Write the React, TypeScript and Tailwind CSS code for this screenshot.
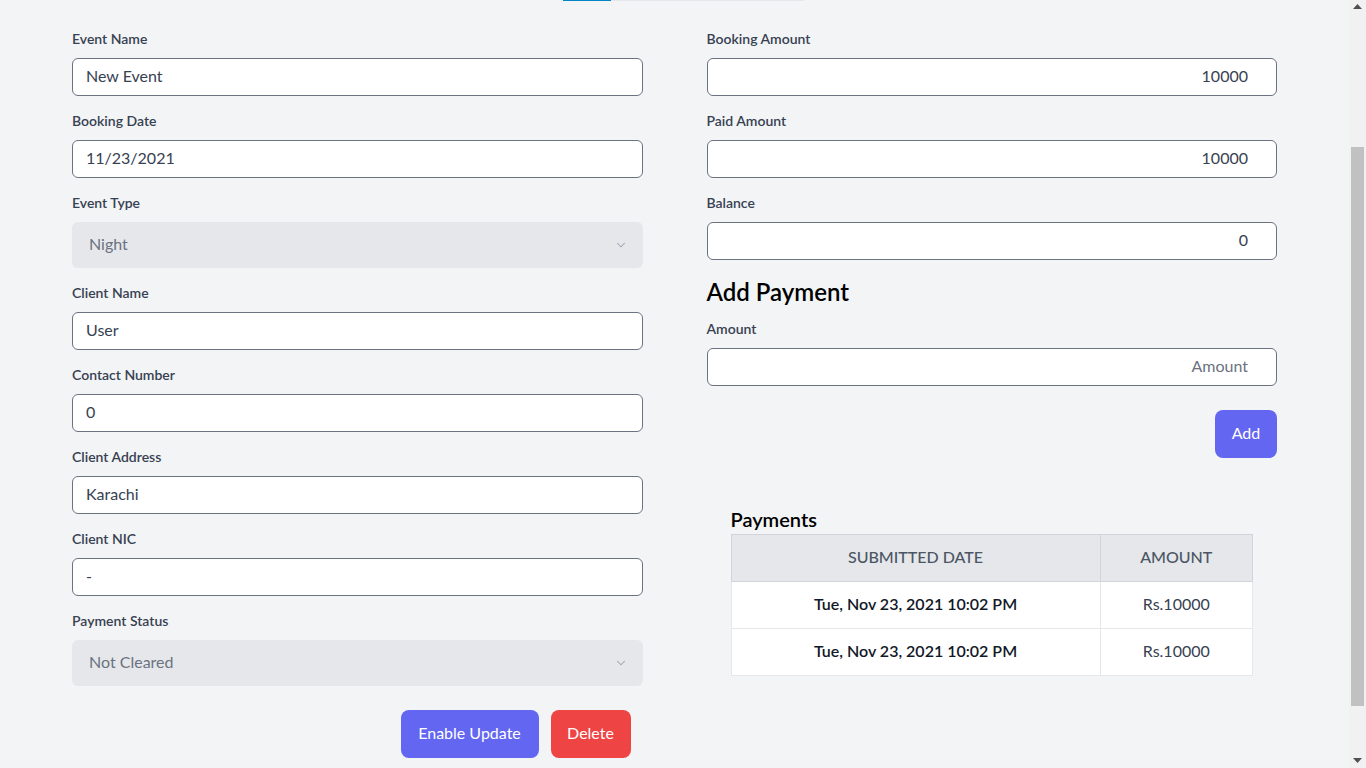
import { ChevronDown } from "lucide-react";

const leftFields = [
  { label: "Event Name", value: "New Event" },
  { label: "Booking Date", value: "11/23/2021" },
  { label: "Event Type", value: "Night", select: true },
  { label: "Client Name", value: "User" },
  { label: "Contact Number", value: "0" },
  { label: "Client Address", value: "Karachi" },
  { label: "Client NIC", value: "-" },
  { label: "Payment Status", value: "Not Cleared", select: true },
];

const amountFields = [
  { label: "Booking Amount", value: "10000" },
  { label: "Paid Amount", value: "10000" },
  { label: "Balance", value: "0" },
];

const payments = [
  { date: "Tue, Nov 23, 2021 10:02 PM", amount: "Rs.10000" },
  { date: "Tue, Nov 23, 2021 10:02 PM", amount: "Rs.10000" },
];

const Label = ({ children }: { children: string }) => (
  <label className="block h-5 mb-[9px] text-sm leading-5 font-semibold text-[#374151]">{children}</label>
);

const Field = ({ label, value, select, right }: { label: string; value: string; select?: boolean; right?: boolean }) => (
  <div>
    <Label>{label}</Label>
    {select ? (
      // disabled select look
      <div className="flex items-center justify-between h-[46px] rounded-md bg-[#e5e7eb] pl-[17px] pr-[15px] pb-[3px] text-base text-[#6b7280]">
        <span>{value}</span>
        <ChevronDown size={14} strokeWidth={1.75} className="mt-[3px] text-[#9ca3af]" />
      </div>
    ) : (
      <input
        readOnly
        defaultValue={value}
        className={`block w-full h-[38px] rounded-md border border-[#6b7280] bg-white pb-[3px] text-base text-[#374151] outline-none ${right ? "text-right pr-7 pl-3" : "px-[13px]"}`}
      />
    )}
  </div>
);

export default function App() {
  return (
    <div className="flex h-[768px] overflow-hidden bg-[#f3f4f6] font-['Lato','Noto_Sans',sans-serif]">
      <div className="flex-1 flex flex-col">
        {/* tab underline from the header above */}
        <div className="flex h-px pl-[563px]">
          <div className="w-12 bg-[#0284c7]" />
          <div className="w-[193px] bg-[#e5e7eb]" />
        </div>

        <div className="grid grid-cols-2 gap-x-16 px-[72px] pt-7">
          {/* Left column */}
          <div className="flex flex-col">
            <div className="flex flex-col gap-[15px]">
              {leftFields.map((f) => (
                <Field key={f.label} {...f} />
              ))}
            </div>
            <div className="flex justify-end gap-3 pr-3 mt-6">
              <button className="h-12 w-[138px] rounded-lg bg-[#6366f1] pb-0.5 text-white text-base">Enable Update</button>
              <button className="h-12 w-20 rounded-lg bg-[#ef4444] pb-0.5 text-white text-base">Delete</button>
            </div>
          </div>

          {/* Right column */}
          <div className="flex flex-col">
            <div className="flex flex-col gap-[15px]">
              {amountFields.map((f) => (
                <Field key={f.label} {...f} right />
              ))}
            </div>
            <h2 className="mt-4 text-2xl leading-8 font-semibold text-black">Add Payment</h2>
            <div className="mt-[11px]">
              <Label>Amount</Label>
              <input
                placeholder="Amount"
                className="block w-full h-[38px] rounded-md border border-[#6b7280] bg-white pl-3 pr-7 pb-[3px] text-right text-base text-[#374151] placeholder:text-[#6b7280] outline-none"
              />
            </div>
            <div className="flex justify-end mt-6">
              <button className="h-12 w-[62px] rounded-lg bg-[#6366f1] pb-0.5 text-white text-base">Add</button>
            </div>

            <div className="mx-6 mt-[47px]">
              <h3 className="text-xl leading-7 font-semibold text-black">Payments</h3>
              <table className="w-full mt-px border-collapse border border-[#e5e7eb] bg-white text-base">
                <thead>
                  <tr className="h-[47px] bg-[#e5e7eb] text-[#4b5563] uppercase">
                    <th className="font-medium border border-[#d1d5db] w-[369px] pb-0.5">Submitted Date</th>
                    <th className="font-medium border border-[#d1d5db] pb-0.5">Amount</th>
                  </tr>
                </thead>
                <tbody>
                  {payments.map((p, i) => (
                    <tr key={i} className="h-[47px]">
                      <td className="text-center font-semibold text-[#111827] border border-[#e5e7eb] pb-0.5">{p.date}</td>
                      <td className="text-center text-[#374151] border border-[#e5e7eb] pb-0.5">{p.amount}</td>
                    </tr>
                  ))}
                </tbody>
              </table>
            </div>
          </div>
        </div>
      </div>

      {/* browser scrollbar, scrolled down */}
      <div className="w-[17px] flex flex-col items-center bg-[#f1f1f1]">
        <svg width="9" height="5" viewBox="0 0 9 5" className="mt-[4px] fill-[#505050]">
          <path d="M4.5 0L9 5H0z" />
        </svg>
        <div className="w-[13px] h-[559px] mt-[138px] bg-[#c1c1c1]" />
        <svg width="9" height="5" viewBox="0 0 9 5" className="mt-auto mb-[5px] fill-[#505050]">
          <path d="M0 0h9L4.5 5z" />
        </svg>
      </div>
    </div>
  );
}
